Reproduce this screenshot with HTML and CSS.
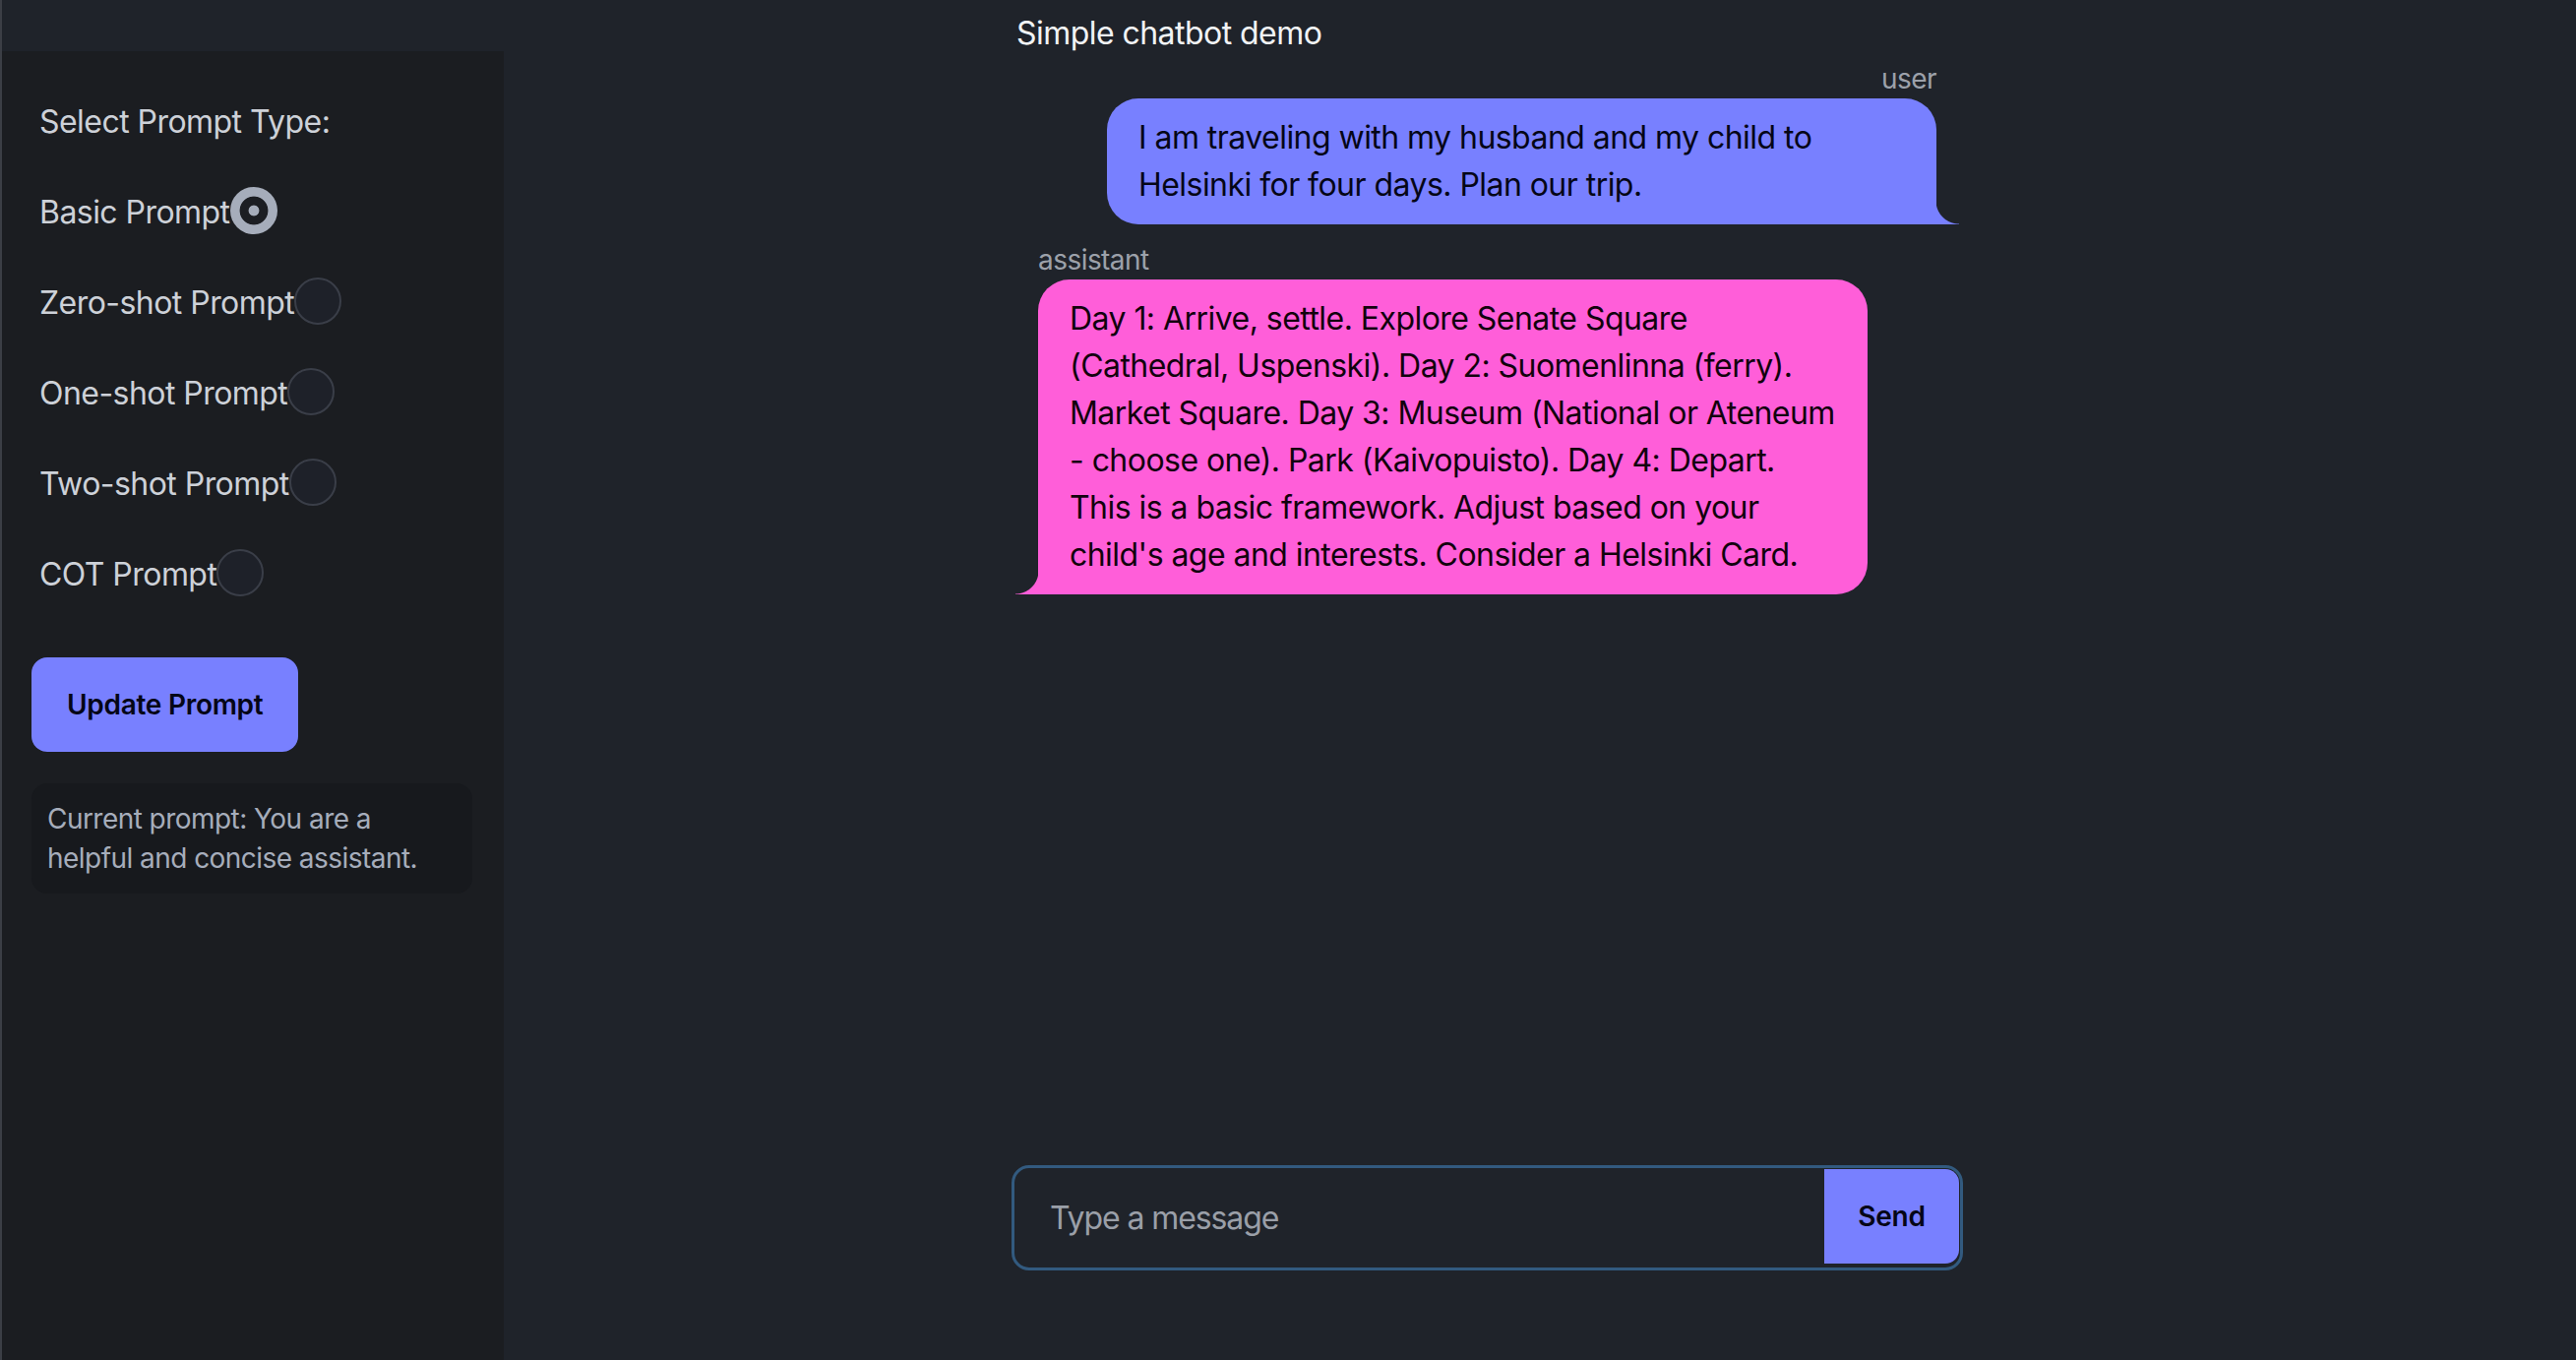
FILE: index.html
```html
<!DOCTYPE html>
<html lang="en">
<head>
<meta charset="utf-8">
<title>Simple chatbot demo</title>
<link rel="stylesheet" href="styles.css">
</head>
<body>
<div class="app">
  <aside class="sidebar">
    <div class="field-title">Select Prompt Type:</div>
    <div class="options">
      <label class="option"><span class="option-text">Basic Prompt</span><span class="radio radio-checked"></span></label>
      <label class="option"><span class="option-text">Zero-shot Prompt</span><span class="radio"></span></label>
      <label class="option"><span class="option-text">One-shot Prompt</span><span class="radio"></span></label>
      <label class="option"><span class="option-text">Two-shot Prompt</span><span class="radio"></span></label>
      <label class="option"><span class="option-text">COT Prompt</span><span class="radio"></span></label>
    </div>
    <button class="btn-update">Update Prompt</button>
    <div class="current-prompt">Current prompt: You are a helpful and concise assistant.</div>
  </aside>
  <main class="main">
    <div class="title">Simple chatbot demo</div>
    <div class="chat-list">
      <div class="chat chat-end">
        <div class="chat-header">user</div>
        <div class="bubble bubble-user">I am traveling with my husband and my child to Helsinki for four days. Plan our trip.</div>
      </div>
      <div class="chat chat-start">
        <div class="chat-header">assistant</div>
        <div class="bubble bubble-assistant">Day 1: Arrive, settle. Explore Senate Square<br>(Cathedral, Uspenski). Day 2: Suomenlinna (ferry).<br>Market Square. Day 3: Museum (National or Ateneum<br>- choose one). Park (Kaivopuisto). Day 4: Depart.<br>This is a basic framework. Adjust based on your<br>child's age and interests. Consider a Helsinki Card.</div>
      </div>
    </div>
    <div class="composer">
      <input class="composer-input" type="text" placeholder="Type a message">
      <button class="composer-send">Send</button>
    </div>
  </main>
</div>
</body>
</html>
```
FILE: styles.css
```css
* { box-sizing: border-box; }

html, body {
  margin: 0;
  padding: 0;
}

body {
  width: 2618px;
  height: 1382px;
  overflow: hidden;
  background: #1f232a;
  font-family: Inter, "Noto Sans", "DejaVu Sans", sans-serif;
  letter-spacing: -0.034em;
  color: #cdd1d8;
}

.app {
  display: flex;
  height: 1382px;
  border-left: 2px solid #3b3e45;
}

/* Sidebar */
.sidebar {
  width: 510px;
  flex: none;
  margin-top: 52px;
  background: #1b1d21;
  padding: 32px 32px 0 30px;
  display: flex;
  flex-direction: column;
}

.field-title {
  font-size: 32px;
  line-height: 48px;
  padding: 16px 8px;
  color: #cdd1d8;
}

.options {
  display: flex;
  flex-direction: column;
  gap: 12px;
  margin-top: 12px;
}

.option {
  display: flex;
  align-items: center;
  padding: 16px 8px;
  font-size: 32px;
  line-height: 48px;
  color: #cdd1d8;
  cursor: pointer;
}

.radio {
  width: 48px;
  height: 48px;
  border-radius: 50%;
  border: 2px solid #3a3e48;
  background: #1e2129;
  flex: none;
  margin-top: -4px;
}

.radio-checked {
  border: none;
  background: radial-gradient(circle, #a6adbb 0 5px, #1c1e23 5.8px 14px, #a6adbb 14.8px);
}

.btn-update {
  align-self: flex-start;
  margin-top: 44px;
  height: 96px;
  padding: 0 36px;
  border: none;
  border-radius: 16px;
  background: #7880ff;
  color: #050617;
  font-family: inherit;
  letter-spacing: -0.01em;
  font-size: 28px;
  font-weight: 600;
}

.current-prompt {
  margin-top: 32px;
  padding: 16px;
  border-radius: 16px;
  background: #17191d;
  color: #a6adbb;
  font-size: 28px;
  line-height: 40px;
}

/* Main */
.main {
  flex: 1;
  display: flex;
  flex-direction: column;
  padding: 0 0 91px 516px;
}

.title,
.chat-list,
.composer {
  width: 967px;
}

.title {
  padding: 15px 0 0 5px;
  font-size: 32px;
  line-height: 37px;
  color: #f1f3f5;
}

.chat-list {
  flex: 1;
  padding: 0 3px;
  display: flex;
  flex-direction: column;
}

.chat {
  display: flex;
  flex-direction: column;
  padding: 8px 24px;
}

.chat-end { align-items: flex-end; }
.chat-start { align-items: flex-start; }

.chat-header {
  font-size: 28px;
  line-height: 40px;
  color: #9ca1aa;
}

.bubble {
  position: relative;
  max-width: 843px;
  padding: 16px 32px;
  border-radius: 32px;
  font-size: 32px;
  line-height: 48px;
  min-height: 88px;
}

.bubble::before {
  content: "";
  position: absolute;
  bottom: 0;
  width: 24px;
  height: 24px;
  background: inherit;
}

.bubble-user {
  background: #7880ff;
  color: #050617;
  border-bottom-right-radius: 0;
}

.bubble-user::before {
  right: -23px;
  -webkit-mask: radial-gradient(circle at 100% 0, transparent 23px, #000 24px);
  mask: radial-gradient(circle at 100% 0, transparent 23px, #000 24px);
}

.bubble-assistant {
  width: 843px;
  white-space: nowrap;
  background: #ff5ed9;
  color: #12020d;
  border-bottom-left-radius: 0;
}

.bubble-assistant::before {
  left: -23px;
  -webkit-mask: radial-gradient(circle at 0 0, transparent 23px, #000 24px);
  mask: radial-gradient(circle at 0 0, transparent 23px, #000 24px);
}

/* Composer */
.composer {
  display: flex;
  height: 107px;
  border: 3px solid #325a7f;
  border-radius: 18px;
  padding: 1px;
  background: #1f232a;
}

.composer-input {
  flex: 1;
  min-width: 0;
  border: none;
  outline: none;
  background: transparent;
  padding: 0 0 0 35px;
  font-family: inherit;
  letter-spacing: -0.034em;
  font-size: 32px;
  color: #cdd1d8;
}

.composer-input::placeholder {
  color: #9a9fa8;
}

.composer-send {
  width: 137px;
  height: 96px;
  border: none;
  border-radius: 0 14px 14px 0;
  background: #7880ff;
  color: #050617;
  font-family: inherit;
  letter-spacing: -0.01em;
  font-size: 28px;
  font-weight: 600;
}
```
